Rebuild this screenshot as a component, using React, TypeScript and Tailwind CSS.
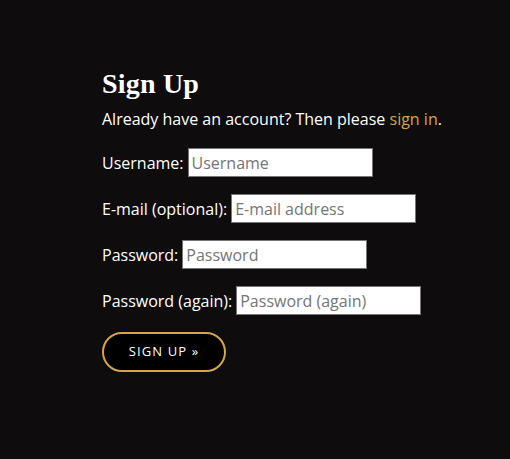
import React from "react";

const rows = [
  { label: "Username:", ph: "Username", type: "text" },
  { label: "E-mail (optional):", ph: "E-mail address", type: "email" },
  { label: "Password:", ph: "Password", type: "password" },
  { label: "Password (again):", ph: "Password (again)", type: "password" },
];

export default function App() {
  return (
    <div className="min-h-[459px] w-full bg-[#0e0c0c] text-white font-['Open_Sans',sans-serif]">
      <div className="pl-[102px] pt-[66px]">
        <h1 className="font-['Liberation_Serif',serif] text-[28px] font-bold leading-[36px] tracking-[0.2px]">Sign Up</h1>
        <p className="mt-[6px] text-[16px] leading-[22px]">
          Already have an account? Then please <a className="text-[#d6a44b]" href="#">sign in</a>.
        </p>
        <form className="mt-[18px] flex flex-col gap-[17px]">
          {rows.map((r) => (
            <div key={r.label} className="flex items-center h-[29px]">
              <label className="text-[16px] leading-[22px] mr-[4px]">{r.label}</label>
              <input
                type={r.type === "password" ? "text" : r.type}
                placeholder={r.ph}
                className="w-[185px] h-[29px] bg-white border border-[#767676] px-[3px] text-[16px] text-black placeholder:text-[#757575] outline-none"
              />
            </div>
          ))}
          <div>
            <button
              type="button"
              className="w-[124px] h-[40px] rounded-full border-2 border-[#d6a44b] bg-black text-white text-[13px] tracking-[1.1px] font-medium"
            >
              SIGN UP »
            </button>
          </div>
        </form>
      </div>
    </div>
  );
}
